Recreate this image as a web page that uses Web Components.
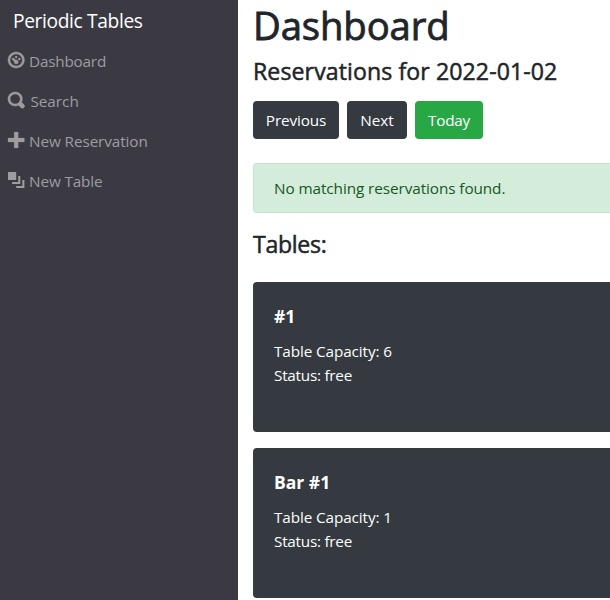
<!DOCTYPE html>
<html lang="en">
<head>
<meta charset="utf-8">
<title>Periodic Tables</title>
<style>
html, body { margin: 0; height: 100%; overflow: hidden; background: #fff; }
body { font: 400 15.3px/24px "Open Sans", "Noto Sans", sans-serif; color: #212529; }
</style>
</head>
<body>
<script>
function define(name, markup) {
  customElements.define(name, class extends HTMLElement {
    constructor() {
      super();
      this.attachShadow({ mode: "open" }).innerHTML = markup;
    }
  });
}

define("app-shell", `
<style>
:host { display: flex; height: 600px; }
aside { flex: 0 0 238px; background: #3b3a43; }
main { flex: 1; min-width: 0; padding-left: 15px; }
</style>
<aside><slot name="sidebar"></slot></aside><main><slot></slot></main>`);

define("side-nav", `
<style>
:host { display: block; }
.brand { height: 41px; padding-left: 13px; color: #fff; font-size: 19.2px; line-height: 41px; letter-spacing: -.36px; white-space: nowrap; }
nav { display: flex; flex-direction: column; }
</style>
<div class="brand"><slot name="brand"></slot></div><nav><slot></slot></nav>`);

const ICONS = {
  dashboard: "M4 0c-2.2 0-4 1.8-4 4s1.8 4 4 4 4-1.8 4-4-1.8-4-4-4zm0 1c1.66 0 3 1.34 3 3s-1.34 3-3 3-3-1.34-3-3 1.34-3 3-3zm0 1c-.28 0-.5.22-.5.5s.22.5.5.5.5-.22.5-.5-.22-.5-.5-.5zm-1.66 1a.5.5 0 0 0-.19.84l.91.91c-.02.08-.06.16-.06.25 0 .55.45 1 1 1s1-.45 1-1-.45-1-1-1c-.09 0-.17.04-.25.06l-.91-.91a.5.5 0 0 0-.5-.15zm3.16 0c-.28 0-.5.22-.5.5s.22.5.5.5.5-.22.5-.5-.22-.5-.5-.5z",
  search: "M3.5 0c-1.93 0-3.5 1.57-3.5 3.5s1.57 3.5 3.5 3.5c.59 0 1.17-.14 1.66-.41a1 1 0 0 0 .13.13l1 1a1.02 1.02 0 1 0 1.44-1.44l-1-1a1 1 0 0 0-.16-.13c.27-.49.44-1.06.44-1.66 0-1.93-1.55-3.5-3.5-3.5zm0 1c1.39 0 2.5 1.11 2.5 2.5 0 .66-.24 1.27-.66 1.72l-.03.03a1 1 0 0 0-.13.13c-.44.4-1.04.63-1.69.63-1.39 0-2.5-1.11-2.5-2.5s1.11-2.5 2.5-2.5z",
  plus: "M3 0v3h-3v2h3v3h2v-3h3v-2h-3v-3h-2z",
  layers: "M0 0v4h4v-4h-4zm5 2v3h-3v1h4v-4h-1zm2 2v3h-3v1h4v-4h-1z"
};
customElements.define("nav-link", class extends HTMLElement {
  connectedCallback() {
    if (this.shadowRoot) return;
    this.attachShadow({ mode: "open" }).innerHTML = `
<style>
:host { display: block; height: 40px; color: #9d9da1; letter-spacing: var(--track, 0); }
a { display: flex; align-items: center; height: 40px; padding-left: 8.4px; color: inherit; white-space: nowrap; }
svg { flex: none; overflow: visible; width: 16.4px; height: 16px; margin: -2px 4.3px 0 0; fill: currentColor; stroke: currentColor; stroke-width: var(--bold, 0); }
span { padding-left: var(--indent, 0); }
</style>
<a><svg viewBox="0 0 8 8" preserveAspectRatio="none"><path d="${ICONS[this.getAttribute("icon")]}"/></svg><span><slot></slot></span></a>`;
  }
});

define("page-title", `
<style>
:host { display: block; }
h1 { margin: 0; height: 56px; font-size: 38.3px; line-height: 51px; font-weight: 500; letter-spacing: -.12px; -webkit-text-stroke: .8px currentColor; white-space: nowrap; }
</style>
<h1><slot></slot></h1>`);

define("section-title", `
<style>
:host { display: block; height: 29px; }
h2 { margin: 0; padding-top: var(--drop, 0); font-size: 23.1px; line-height: 29px; font-weight: 500; letter-spacing: var(--track, 0); -webkit-text-stroke: .5px currentColor; white-space: nowrap; }
</style>
<h2><slot></slot></h2>`);

define("button-row", `
<style>:host { display: flex; gap: 8px; margin-top: 16px; }</style><slot></slot>`);

define("action-button", `
<style>
:host { display: block; width: var(--w); }
button { display: block; box-sizing: border-box; width: 100%; height: 38px; margin: 0; padding: 0; border: 0; border-radius: 4px; background: var(--fill, #343a40); color: #fff; font: inherit; letter-spacing: var(--track, 0); text-align: center; white-space: nowrap; }
</style>
<button><slot></slot></button>`);

define("alert-box", `
<style>
:host { display: block; box-sizing: border-box; height: 50px; margin: 24px 0 17px; padding: 12px 20px; border: 1px solid #c3e6cb; border-right: 0; border-radius: 4px 0 0 4px; background: #d4edda; color: #155724; letter-spacing: -.08px; white-space: nowrap; }
</style>
<slot></slot>`);

define("table-list", `
<style>:host { display: flex; flex-direction: column; gap: 16px; margin-top: 23px; }</style><slot></slot>`);

define("table-card", `
<style>
:host { display: block; box-sizing: border-box; height: 150px; padding: 21px; border-radius: 4px 0 0 4px; background: #343a40; color: #fff; white-space: nowrap; }
h3 { margin: 0 0 10px; font-size: 17.5px; line-height: 26px; font-weight: 700; }
.line { height: 24px; }
.capacity { letter-spacing: -.11px; }
.status { letter-spacing: -.25px; }
</style>
<h3><slot name="name"></slot></h3>
<div class="line capacity">Table Capacity: <slot name="capacity"></slot></div>
<div class="line status">Status: <slot name="status"></slot></div>`);
</script>
<app-shell>
  <side-nav slot="sidebar">
    <span slot="brand">Periodic Tables</span>
    <nav-link icon="dashboard" style="--track:-.22px;--bold:.22">Dashboard</nav-link>
    <nav-link icon="search" style="--indent:1.3px;--bold:.25">Search</nav-link>
    <nav-link icon="plus" style="--track:-.1px;--bold:.1">New Reservation</nav-link>
    <nav-link icon="layers" style="--track:-.15px">New Table</nav-link>
  </side-nav>
  <page-title>Dashboard</page-title>
  <section-title style="--track:.1px;--drop:1px">Reservations for 2022-01-02</section-title>
  <button-row>
    <action-button style="--w:86px;--track:-.14px">Previous</action-button>
    <action-button style="--w:60px">Next</action-button>
    <action-button style="--w:68px;--fill:#28a745;--track:-.2px">Today</action-button>
  </button-row>
  <alert-box>No matching reservations found.</alert-box>
  <section-title style="--track:-.3px">Tables:</section-title>
  <table-list>
    <table-card><span slot="name">#1</span><span slot="capacity">6</span><span slot="status">free</span></table-card>
    <table-card><span slot="name">Bar #1</span><span slot="capacity">1</span><span slot="status">free</span></table-card>
  </table-list>
</app-shell>
</body>
</html>
